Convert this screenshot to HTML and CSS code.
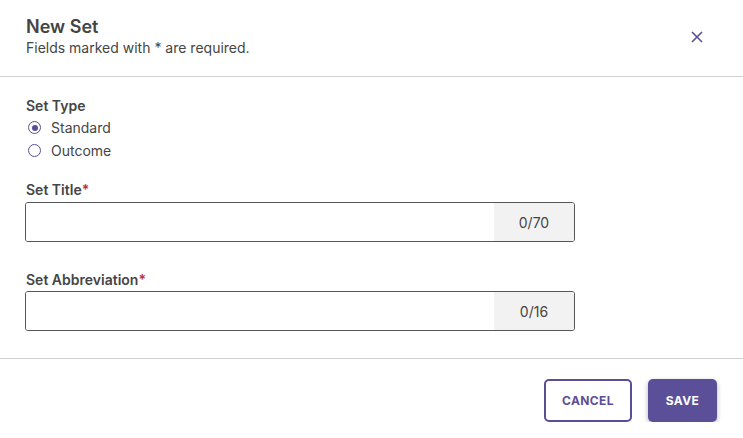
FILE: index.html
```html
<!DOCTYPE html>
<html lang="en">
<head>
    <meta charset="UTF-8">
    <meta name="viewport" content="width=device-width, initial-scale=1.0">
    <title>New Set</title>
    <link rel="stylesheet" href="styles.css">
</head>
<body>
    <div class="modal">
        <header class="modal-header">
            <div>
                <h1>New Set</h1>
                <p>Fields marked with * are required.</p>
            </div>
            <button class="close-button" aria-label="Close">
                <svg width="12" height="12" viewBox="0 0 12 12">
                    <path d="M1 1L11 11M11 1L1 11" stroke="#5a4f96" stroke-width="1.6" fill="none"/>
                </svg>
            </button>
        </header>

        <main class="modal-body">
            <div class="field-label">Set Type</div>
            <div class="radio-group">
                <label class="radio-row">
                    <span class="radio checked"></span>
                    Standard
                </label>
                <label class="radio-row">
                    <span class="radio"></span>
                    Outcome
                </label>
            </div>

            <div class="field-label spaced">Set Title<span class="required">*</span></div>
            <div class="text-input">
                <input type="text">
                <span class="counter">0/70</span>
            </div>

            <div class="field-label spaced-lg">Set Abbreviation<span class="required">*</span></div>
            <div class="text-input">
                <input type="text">
                <span class="counter">0/16</span>
            </div>
        </main>

        <footer class="modal-footer">
            <button class="btn btn-outline">Cancel</button>
            <button class="btn btn-primary">Save</button>
        </footer>
    </div>
</body>
</html>
```

FILE: styles.css
```css
body {
    margin: 0;
    font-family: Inter, "Noto Sans", sans-serif;
    color: #454545;
    background: white;
}

.modal {
    width: 743px;
}

.modal-header {
    display: flex;
    justify-content: space-between;
    align-items: flex-start;
    padding: 16px 40px 18px 26px;
    border-bottom: 1px solid #d0d0d0;
}

.modal-header h1 {
    margin: 0;
    font-size: 18px;
    line-height: 22px;
    font-weight: 600;
    color: #444;
}

.modal-header p {
    margin: 0;
    font-size: 14px;
    line-height: 20px;
}

.close-button {
    background: none;
    border: none;
    padding: 0;
    margin-top: 15px;
    cursor: pointer;
    display: flex;
}

.modal-body {
    padding: 19px 25px 27px 25px;
    border-bottom: 1px solid #d0d0d0;
}

.field-label {
    font-size: 14px;
    line-height: 20px;
    font-weight: 600;
    color: #454545;
    padding-left: 1px;
}

.field-label.spaced {
    margin-top: 18px;
    margin-bottom: 2px;
}

.field-label.spaced-lg {
    margin-top: 28px;
    margin-bottom: 1px;
}

.required {
    color: #b8323a;
}

.radio-row {
    display: flex;
    align-items: center;
    height: 23px;
    font-size: 14px;
    gap: 10px;
    padding-left: 3px;
}

.radio {
    width: 13px;
    height: 13px;
    box-sizing: border-box;
    border: 1.5px solid #5a4f96;
    border-radius: 50%;
    display: flex;
    align-items: center;
    justify-content: center;
}

.radio.checked::after {
    content: "";
    width: 6px;
    height: 6px;
    border-radius: 50%;
    background: #5a4f96;
}

.text-input {
    display: flex;
    width: 550px;
    height: 40px;
    box-sizing: border-box;
    border: 1px solid #555;
    border-radius: 3px;
    overflow: hidden;
}

.text-input input {
    flex: 1;
    border: none;
    outline: none;
    font-family: inherit;
    font-size: 14px;
    padding: 0 10px;
}

.counter {
    width: 80px;
    background: #f2f2f2;
    display: flex;
    align-items: center;
    justify-content: center;
    font-size: 14px;
    color: #454545;
}

.modal-footer {
    display: flex;
    justify-content: flex-end;
    gap: 16px;
    padding: 20px 26px 0 0;
}

.btn {
    height: 43px;
    font-family: inherit;
    font-size: 12px;
    font-weight: 700;
    text-transform: uppercase;
    letter-spacing: 0.4px;
    border-radius: 5px;
    cursor: pointer;
}

.btn-outline {
    width: 88px;
    background: white;
    color: #5a4f96;
    border: 2px solid #5a4f96;
}

.btn-primary {
    width: 69px;
    background: #5b4f99;
    color: white;
    border: none;
    box-shadow: 0 2px 5px rgba(0, 0, 0, 0.3);
}
```
